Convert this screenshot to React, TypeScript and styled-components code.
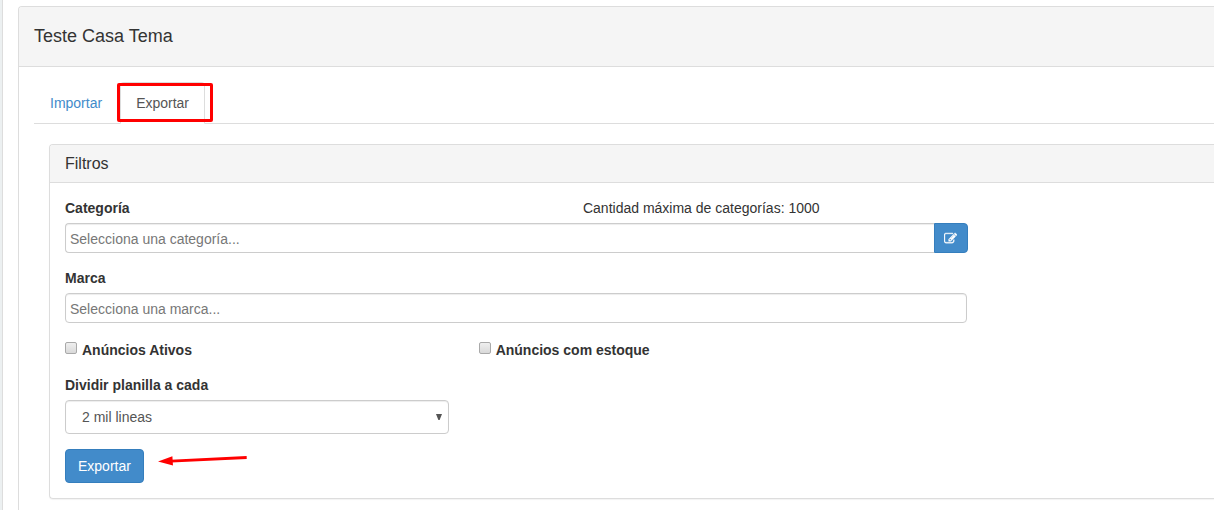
import React from "react";
import styled, { createGlobalStyle } from "styled-components";

const GlobalStyle = createGlobalStyle`
  *, *::before, *::after { box-sizing: border-box; }
  body {
    margin: 0;
    background: #fff;
    color: #333;
    font-family: "Liberation Sans", Arial, sans-serif;
    font-size: 14px;
    line-height: 20px;
  }
  input, select, button { font: inherit; }
`;

const Shell = styled.div`
  display: flex;
  min-height: 100vh;
  border-left: 2px solid #ecf0f1;
`;

const Content = styled.main`
  flex: 1;
  min-width: 0;
  display: flex;
  padding: 6px 0 0 15px;
  border-left: 1px solid #ddd;
`;

const MainPanel = styled.section`
  flex: 1;
  min-width: 0;
  border: 1px solid #ddd;
  border-width: 1px 0 0 1px;
  border-top-left-radius: 4px;
`;

const MainHeader = styled.header`
  padding: 19px 15px 20px;
  background: #f5f5f5;
  border-bottom: 1px solid #ddd;
  border-top-left-radius: 3px;
`;

const MainTitle = styled.h1`
  margin: 0;
  font-size: 18px;
  font-weight: 400;
  line-height: 20px;
`;

const MainBody = styled.div`
  padding: 15px 0 11px 15px;
`;

const Tabs = styled.ul`
  display: flex;
  gap: 2px;
  margin: 0;
  padding: 0;
  list-style: none;
  border-bottom: 1px solid #ddd;
`;

const TabItem = styled.li`
  position: relative;
  margin-bottom: -1px;
`;

const TabLink = styled.a<{ $active?: boolean }>`
  display: block;
  padding: 10px 15px;
  border: 1px solid;
  border-color: ${(p) => (p.$active ? "#ddd #ddd #fff" : "transparent")};
  border-radius: 4px 4px 0 0;
  background: ${(p) => (p.$active ? "#fff" : "transparent")};
  color: ${(p) => (p.$active ? "#555" : "#428bca")};
  text-decoration: none;
`;

const Highlight = styled.span`
  position: absolute;
  inset: 1px -8px 2px -3px;
  border: 3px solid #f00;
  border-radius: 2px;
  pointer-events: none;
`;

const TabContent = styled.div`
  padding: 20px 0 0 15px;
`;

const FilterPanel = styled.section`
  border: 1px solid #ddd;
  border-right: 0;
  border-radius: 4px 0 0 4px;
  box-shadow: 0 1px 1px rgba(0, 0, 0, 0.05);
`;

const FilterHeader = styled.header`
  padding: 9px 15px 8px;
  background: #f5f5f5;
  border-bottom: 1px solid #ddd;
  border-top-left-radius: 3px;
`;

const FilterTitle = styled.h2`
  margin: 0;
  font-size: 16px;
  font-weight: 400;
  line-height: 20px;
`;

const FilterForm = styled.form`
  display: flex;
  flex-direction: column;
  gap: 15px;
  padding: 15px 0 15px 15px;
`;

const Field = styled.div<{ $width: string }>`
  display: flex;
  flex-direction: column;
  gap: 5px;
  width: ${(p) => p.$width};
`;

const LabelRow = styled.div`
  display: grid;
  grid-template-columns: 518fr 384fr;
`;

const Label = styled.label`
  font-weight: 700;
`;

const InputGroup = styled.div`
  display: flex;
  margin-right: -1px;
`;

const TextInput = styled.input<{ $joined?: boolean }>`
  flex: 1;
  min-width: 0;
  width: 100%;
  min-height: 30px;
  padding: 5px 4px 3px;
  line-height: 20px;
  border: 1px solid #ccc;
  border-right-width: ${(p) => (p.$joined ? "0" : "1px")};
  border-radius: ${(p) => (p.$joined ? "4px 0 0 4px" : "4px")};
  box-shadow: inset 0 1px 1px rgba(0, 0, 0, 0.075);
  background: #fff;
  color: #555;
  &::placeholder { color: #777; opacity: 1; }
`;

const EditButton = styled.button`
  display: flex;
  align-items: center;
  justify-content: center;
  width: 34px;
  padding: 0;
  border: 1px solid #357ebd;
  border-radius: 0 4px 4px 0;
  background: #428bca;
  color: #fff;
`;

const CheckRow = styled.div`
  display: grid;
  grid-template-columns: 36% 64%;
  padding: 2px 0 0;
`;

const CheckLabel = styled.label`
  display: flex;
  align-items: flex-start;
  gap: 5px;
  font-weight: 700;
`;

const Checkbox = styled.input`
  appearance: none;
  width: 12px;
  height: 12px;
  margin: 2px 0 0;
  border: 1px solid #a9a9a9;
  border-radius: 2px;
  background: linear-gradient(#efefef, #d9d9d9);
  &:checked { background: #428bca; }
`;

const SelectBox = styled.div`
  position: relative;
`;

const Select = styled.select`
  appearance: none;
  display: block;
  width: 100%;
  height: 34px;
  padding: 6px 24px 6px 16px;
  border: 1px solid #ccc;
  border-radius: 4px;
  box-shadow: inset 0 1px 1px rgba(0, 0, 0, 0.075);
  background: #fff;
  color: #555;
`;

const Caret = styled.svg`
  position: absolute;
  right: 7px;
  top: 14px;
  pointer-events: none;
`;

const Actions = styled.div`
  display: flex;
  gap: 14px;
`;

const SubmitButton = styled.button`
  padding: 6px 12px;
  border: 1px solid #357ebd;
  border-radius: 4px;
  background: #428bca;
  color: #fff;
`;

const EditIcon = () => (
  <svg
    width="13"
    height="13"
    viewBox="0 0 1792 1792"
    fill="currentColor"
    stroke="currentColor"
    strokeWidth="50"
    aria-hidden="true"
  >
    <path d="M888 1184l116-116-152-152-116 116v56h96v96h56zm440-720q-16-16-33 1l-350 350q-17 17-1 33t33-1l350-350q17-17 1-33zm80 594v190q0 119-84.5 203.5t-203.5 84.5h-832q-119 0-203.5-84.5t-84.5-203.5v-832q0-119 84.5-203.5t203.5-84.5h832q63 0 117 25 15 7 18 23 3 17-9 29l-49 49q-14 14-32 8-23-6-45-6h-832q-66 0-113 47t-47 113v832q0 66 47 113t113 47h832q66 0 113-47t47-113v-126q0-13 9-22l64-64q15-15 35-7t20 29zm-96-738l288 288-672 672h-288v-288zm444 132l-92 92-288-288 92-92q28-28 68-28t68 28l152 152q28 28 28 68t-28 68z" />
  </svg>
);

const PointerArrow = () => (
  <svg width="90" height="34" viewBox="0 0 90 34" aria-hidden="true">
    <path d="M13 12.2L88.7 8.5" stroke="#f00" strokeWidth="2.8" fill="none" />
    <path d="M0 12.5L14.4 7.3L15 16.6Z" fill="#f00" />
  </svg>
);

export default function App() {
  return (
    <>
      <GlobalStyle />
      <Shell>
        <Content>
          <MainPanel>
            <MainHeader>
              <MainTitle>Teste Casa Tema</MainTitle>
            </MainHeader>
            <MainBody>
              <Tabs>
                <TabItem>
                  <TabLink href="#importar">Importar</TabLink>
                </TabItem>
                <TabItem>
                  <TabLink href="#exportar" $active aria-current="page">
                    Exportar
                  </TabLink>
                  <Highlight />
                </TabItem>
              </Tabs>
              <TabContent id="exportar">
                <FilterPanel>
                  <FilterHeader>
                    <FilterTitle>Filtros</FilterTitle>
                  </FilterHeader>
                  <FilterForm onSubmit={(e) => e.preventDefault()}>
                    <Field $width="78.5%">
                      <LabelRow>
                        <Label htmlFor="categoria">Categoría</Label>
                        <span>Cantidad máxima de categorías: 1000</span>
                      </LabelRow>
                      <InputGroup>
                        <TextInput
                          id="categoria"
                          type="text"
                          placeholder="Selecciona una categoría..."
                          $joined
                        />
                        <EditButton type="button" aria-label="Editar">
                          <EditIcon />
                        </EditButton>
                      </InputGroup>
                    </Field>
                    <Field $width="78.5%">
                      <Label htmlFor="marca">Marca</Label>
                      <TextInput id="marca" type="text" placeholder="Selecciona una marca..." />
                    </Field>
                    <CheckRow>
                      <CheckLabel>
                        <Checkbox type="checkbox" />
                        Anúncios Ativos
                      </CheckLabel>
                      <CheckLabel>
                        <Checkbox type="checkbox" />
                        Anúncios com estoque
                      </CheckLabel>
                    </CheckRow>
                    <Field $width="33.4%">
                      <Label htmlFor="dividir">Dividir planilla a cada</Label>
                      <SelectBox>
                        <Select id="dividir" defaultValue="2000">
                          <option value="2000">2 mil lineas</option>
                        </Select>
                        <Caret width="6" height="6" viewBox="0 0 6 6" aria-hidden="true">
                          <path d="M0 0H6L3.6 6H2.4Z" fill="#555" />
                        </Caret>
                      </SelectBox>
                    </Field>
                    <Actions>
                      <SubmitButton type="submit">Exportar</SubmitButton>
                      <PointerArrow />
                    </Actions>
                  </FilterForm>
                </FilterPanel>
              </TabContent>
            </MainBody>
          </MainPanel>
        </Content>
      </Shell>
    </>
  );
}
